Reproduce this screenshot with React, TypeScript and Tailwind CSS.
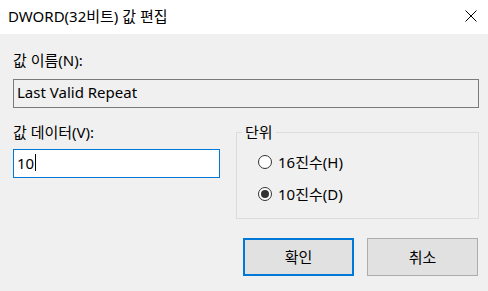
import React from "react";

const font = {
  fontFamily: '"Noto Sans", "Noto Sans CJK KR", sans-serif',
};

function Radio({ checked, label }: { checked: boolean; label: string }) {
  return (
    <div className="flex items-center h-[20px]">
      <span className="w-[14px] h-[14px] rounded-full border border-[#333333] bg-white flex items-center justify-center">
        {checked && <span className="w-[8px] h-[8px] rounded-full bg-[#333333]" />}
      </span>
      <span className="ml-[6px]">{label}</span>
    </div>
  );
}

export default function App() {
  return (
    <div
      className="w-[488px] h-[291px] bg-[#f0f0f0] flex flex-col text-[15px] leading-[20px] text-black overflow-hidden"
      style={font}
    >
      <div className="h-[34px] bg-white flex items-start justify-between pl-[8px] pr-[11px] pt-[6px] shrink-0">
        <span>DWORD(32비트) 값 편집</span>
        <svg width="12" height="12" viewBox="0 0 12 12" className="mt-[4px]">
          <path d="M0.5 0.5 L11.5 11.5 M11.5 0.5 L0.5 11.5" stroke="#000" strokeWidth="1" />
        </svg>
      </div>
      <div className="flex flex-col pl-[13px] pr-[9px] pt-[16px]">
        <div>값 이름(N):</div>
        <div className="mt-[9px] h-[29px] border border-[#7a7a7a] bg-[#f0f0f0] pl-[3px] pt-[2px]">
          Last Valid Repeat
        </div>
        <div className="flex mt-[14px]">
          <div className="w-[207px] flex flex-col">
            <div>값 데이터(V):</div>
            <div className="mt-[7px] h-[29px] border border-[#0078d7] bg-white pl-[3px] pt-[3px] flex items-start">
              <span>10</span>
              <span className="w-[1px] h-[17px] bg-black mt-[1px] ml-[1px]" />
            </div>
          </div>
          <fieldset className="ml-[16px] w-[243px] h-[97px] border border-[#dcdcdc]">
            <legend className="ml-[5px] px-[3px]">단위</legend>
            <div className="flex flex-col gap-[12px] pl-[21px] pt-[10px]">
              <Radio checked={false} label="16진수(H)" />
              <Radio checked={true} label="10진수(D)" />
            </div>
          </fieldset>
        </div>
        <div className="flex justify-end gap-[13px] mt-[19px] pr-[1px]">
          <button className="w-[111px] h-[38px] bg-[#e1e1e1] border-2 border-[#0078d7]">확인</button>
          <button className="w-[111px] h-[38px] bg-[#e1e1e1] border border-[#adadad]">취소</button>
        </div>
      </div>
    </div>
  );
}
